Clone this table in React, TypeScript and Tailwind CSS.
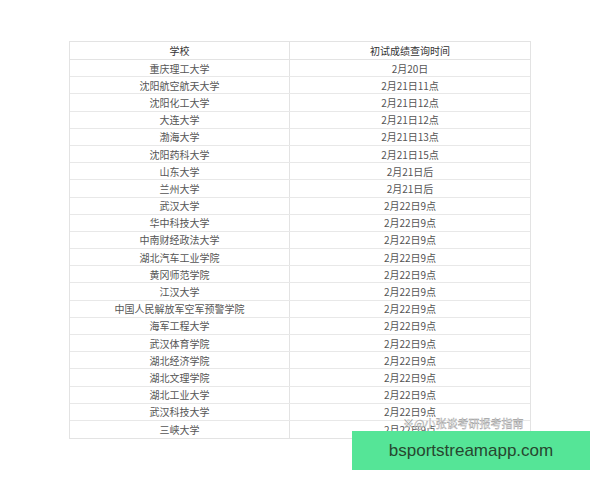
import React from 'react'

const rows: [string, string][] = [
    ['重庆理工大学', '2月20日'],
    ['沈阳航空航天大学', '2月21日11点'],
    ['沈阳化工大学', '2月21日12点'],
    ['大连大学', '2月21日12点'],
    ['渤海大学', '2月21日13点'],
    ['沈阳药科大学', '2月21日15点'],
    ['山东大学', '2月21日后'],
    ['兰州大学', '2月21日后'],
    ['武汉大学', '2月22日9点'],
    ['华中科技大学', '2月22日9点'],
    ['中南财经政法大学', '2月22日9点'],
    ['湖北汽车工业学院', '2月22日9点'],
    ['黄冈师范学院', '2月22日9点'],
    ['江汉大学', '2月22日9点'],
    ['中国人民解放军空军预警学院', '2月22日9点'],
    ['海军工程大学', '2月22日9点'],
    ['武汉体育学院', '2月22日9点'],
    ['湖北经济学院', '2月22日9点'],
    ['湖北文理学院', '2月22日9点'],
    ['湖北工业大学', '2月22日9点'],
    ['武汉科技大学', '2月22日9点'],
    ['三峡大学', '2月22日9点'],
]

export default function App() {
    return (
        <div
            className="relative h-[480px] w-[600px] overflow-hidden bg-white pl-[69px] pt-[41px]"
            style={{ fontFamily: '"Noto Sans CJK SC", "Noto Sans", sans-serif' }}
        >
            <div className="flex w-[462px] flex-col border border-[#e3e3e3] text-[10px] text-[#555]">
                <div className="flex h-[18px] border-b border-[#e3e3e3] text-[#333]">
                    <div className="flex w-[220px] items-center justify-center border-r border-[#e3e3e3]">
                        学校
                    </div>
                    <div className="flex flex-1 items-center justify-center">
                        初试成绩查询时间
                    </div>
                </div>
                {rows.map(([school, time], i) => (
                    <div
                        key={i}
                        className="flex h-[17.2px] border-b border-[#e8e8e8] last:border-b-0"
                    >
                        <div className="flex w-[220px] items-center justify-center border-r border-[#e3e3e3]">
                            {school}
                        </div>
                        <div className="flex flex-1 items-center justify-center">
                            {time}
                        </div>
                    </div>
                ))}
            </div>

            {/* watermark */}
            <div
                className="absolute left-[403px] top-[416px] text-[11px] leading-[14px] text-white"
                style={{ WebkitTextStroke: '0.4px #9a9a9a' }}
            >
                ※@小张谈考研报考指南
            </div>

            {/* banner */}
            <div className="absolute left-[352px] top-[431px] flex h-[39px] w-[238px] items-center justify-center bg-[#55e597]">
                <span
                    className="text-[17px] text-[#27472f]"
                    style={{ fontFamily: '"Liberation Sans", Arial, sans-serif' }}
                >
                    bsportstreamapp.com
                </span>
            </div>
        </div>
    )
}
